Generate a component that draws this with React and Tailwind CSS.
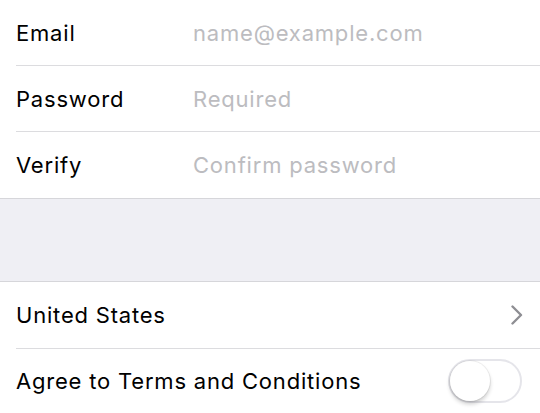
import { useState } from "react";

function FieldRow({ label, placeholder, type = "text", last }) {
  return (
    <div className={`ml-4 flex items-center h-[66px] ${last ? "h-[65px]" : "border-b border-[#dcdcdf]"}`}>
      <label className="w-[177px] shrink-0 text-black">{label}</label>
      <input
        type={type}
        placeholder={placeholder}
        className="flex-1 min-w-0 bg-transparent outline-none text-black tracking-[0.8px] placeholder:text-[#bcbcc0]"
      />
    </div>
  );
}

export default function App() {
  const [agree, setAgree] = useState(false);

  return (
    <div className="w-[540px] h-[413px] overflow-hidden bg-[#efeff4] text-[22px] leading-none tracking-[0.8px]" style={{ fontFamily: 'Inter, "Liberation Sans", Arial, sans-serif' }}>
      <div className="bg-white border-b border-[#d6d6da]">
        <FieldRow label="Email" placeholder="name@example.com" type="email" />
        <FieldRow label="Password" placeholder="Required" type="password" />
        <FieldRow label="Verify" placeholder="Confirm password" type="password" last />
      </div>

      <div className="h-[82px]" />

      <div className="bg-white border-y border-[#d6d6da]">
        <div className="ml-4 h-[67px] flex items-center justify-between pr-[17px] border-b border-[#dcdcdf]">
          <span className="text-black">United States</span>
          <svg width="12" height="20" viewBox="0 0 12 20" fill="none">
            <path d="M1.5 1.5 L10 10 L1.5 18.5" stroke="#8e8e93" strokeWidth="2.4" strokeLinecap="round" strokeLinejoin="round" />
          </svg>
        </div>
        <div className="pl-4 h-[64px] flex items-center justify-between pr-[18px]">
          <span className="text-black">Agree to Terms and Conditions</span>
          <button
            onClick={() => setAgree(!agree)}
            className={`relative w-[74px] h-[44px] rounded-full border-2 ${agree ? "bg-[#4cd964] border-[#4cd964]" : "bg-white border-[#e5e5ea]"}`}
          >
            <span
              className={`absolute top-0 w-[40px] h-[40px] rounded-full bg-white shadow-[0_3px_4px_rgba(0,0,0,0.2),0_0_0_1px_rgba(0,0,0,0.06)] ${agree ? "left-[30px]" : "left-0"}`}
            />
          </button>
        </div>
      </div>
    </div>
  );
}
